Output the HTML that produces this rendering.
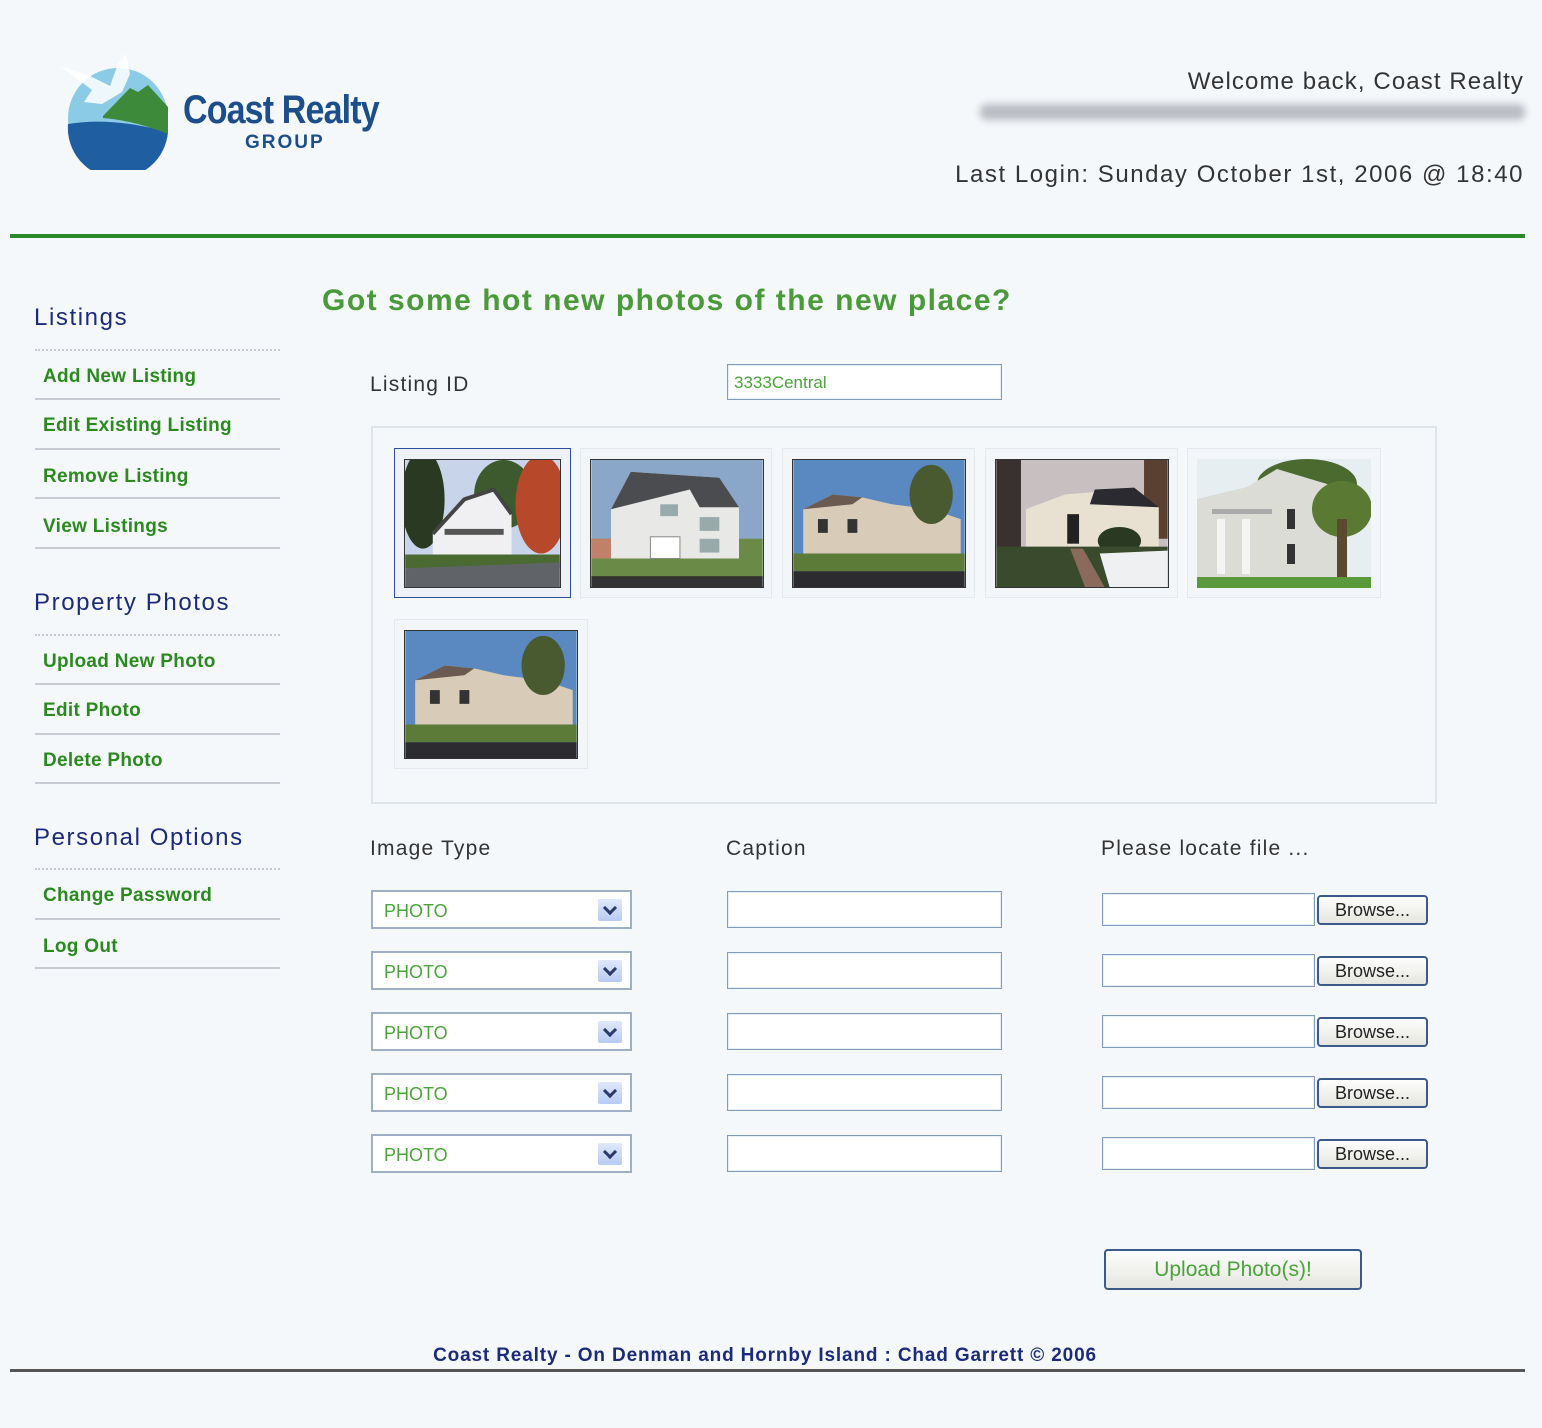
<!DOCTYPE html>
<html><head><meta charset="utf-8"><style>
*{margin:0;padding:0;box-sizing:border-box}
body{width:1542px;height:1428px;background:#f5f8fb;position:relative;overflow:hidden;font-family:"Liberation Sans",sans-serif}
.a{position:absolute;white-space:nowrap}
.h{color:#1b2b7a;font-size:24px;letter-spacing:1.6px}
.l{color:#2a8a1e;font-size:19px;font-weight:bold;left:43px;letter-spacing:.3px}
.dl{position:absolute;left:35px;width:245px;height:0;border-top:2px dotted #c8ccd2}
.sl{position:absolute;left:35px;width:245px;height:0;border-top:2px solid #c8ccd2}
.lab{color:#333;font-size:21px;letter-spacing:1.2px}
.in{position:absolute;background:#fff;border:1px solid #7f9db9;box-shadow:inset 0 0 0 1px #e8eef5}
.sel{position:absolute;left:371px;width:261px;height:39px;background:#fff;border:2px solid #9fb0c6}
.sel span{position:absolute;left:11px;top:9px;color:#4aa43a;font-size:18px}
.sel i{position:absolute;right:8px;top:7px;width:24px;height:22px;background:linear-gradient(#dfe8fb,#b8cbf3);border-radius:2px}
.sel i:after{content:"";position:absolute;left:7px;top:4px;width:7px;height:7px;border-right:3px solid #2c3a6a;border-bottom:3px solid #2c3a6a;transform:rotate(45deg)}
.br{position:absolute;left:1317px;width:111px;height:30px;border:2px solid #3b5a8a;border-radius:4px;background:linear-gradient(#fdfdfd,#e6e6e0);font-size:18px;color:#222;text-align:center;line-height:26px}
.tb{position:absolute;border:1px solid #e4e9ef;background:#f3f6f9}
.ph{position:absolute;left:9px;top:10px;border:1px solid #333}
</style></head><body>
<svg class="a" style="left:58px;top:52px" width="120" height="118" viewBox="0 0 120 118">
<circle cx="60" cy="66" r="50" fill="#8ccbe6"/>
<path d="M10 72 C45 66 80 72 110 80 A50 50 0 0 1 10 72Z" fill="#1f5ea0"/>
<path d="M45 64 L72 36 L80 40 L90 33 L110 55 L110 82 C90 74 68 68 45 66Z" fill="#3d8a3a"/>
<path d="M2 14 L32 24 L52 34 L60 12 L68 2 L72 22 L64 40 L44 52 L26 50 L34 38Z" fill="#fff" opacity=".85"/>
</svg>
<div class="a" style="left:183px;top:88px;font-size:40px;font-weight:bold;color:#1d4e8c;letter-spacing:-1px;transform:scaleX(.85);transform-origin:left">Coast Realty</div>
<div class="a" style="left:245px;top:132px;font-size:19px;font-weight:bold;color:#1d4e8c;letter-spacing:2px">GROUP</div>
<div class="a" style="right:18px;top:68px;font-size:24px;color:#333;letter-spacing:1.1px">Welcome back, Coast Realty</div>
<div class="a" style="left:980px;top:104px;width:545px;height:16px;background:#b8bcc2;filter:blur(4px);border-radius:6px"></div>
<div class="a" style="right:18px;top:161px;font-size:24px;color:#333;letter-spacing:1.55px">Last Login: Sunday October 1st, 2006 @ 18:40</div>
<div class="a" style="left:10px;top:234px;width:1515px;height:4px;background:#2a8a2a"></div>
<div class="a h" style="left:34px;top:304px">Listings</div>
<div class="dl" style="top:349px"></div>
<div class="a l" style="top:366px">Add New Listing</div><div class="sl" style="top:398px"></div>
<div class="a l" style="top:415px">Edit Existing Listing</div><div class="sl" style="top:448px"></div>
<div class="a l" style="top:466px">Remove Listing</div><div class="sl" style="top:497px"></div>
<div class="a l" style="top:516px">View Listings</div><div class="sl" style="top:547px"></div>
<div class="a h" style="left:34px;top:589px">Property Photos</div>
<div class="dl" style="top:634px"></div>
<div class="a l" style="top:651px">Upload New Photo</div><div class="sl" style="top:683px"></div>
<div class="a l" style="top:700px">Edit Photo</div><div class="sl" style="top:733px"></div>
<div class="a l" style="top:750px">Delete Photo</div><div class="sl" style="top:782px"></div>
<div class="a h" style="left:34px;top:824px">Personal Options</div>
<div class="dl" style="top:868px"></div>
<div class="a l" style="top:885px">Change Password</div><div class="sl" style="top:918px"></div>
<div class="a l" style="top:936px">Log Out</div><div class="sl" style="top:967px"></div>
<div class="a" style="left:322px;top:284px;font-size:30px;font-weight:bold;color:#4a9a3a;letter-spacing:1.5px">Got some hot new photos of the new place?</div>
<div class="a lab" style="left:370px;top:373px">Listing ID</div>
<div class="in" style="left:727px;top:364px;width:275px;height:36px"><span class="a" style="left:6px;top:8px;font-size:17px;color:#4aa43a">3333Central</span></div>
<div class="a" style="left:371px;top:426px;width:1066px;height:378px;border:2px solid #dfe4ea"></div>

<div class="tb" style="left:394px;top:448px;width:177px;height:150px;border:1px solid #2b4f9a;background:#eef2f6">
<svg class="ph" width="157" height="129" viewBox="0 0 157 129"><rect width="157" height="129" fill="#c8d4ea"/><ellipse cx="18" cy="40" rx="22" ry="50" fill="#2a3a22"/><ellipse cx="100" cy="35" rx="30" ry="35" fill="#3c5a2e"/><ellipse cx="138" cy="45" rx="26" ry="50" fill="#b8482a"/><path d="M28 75 L60 40 L90 30 L108 55 L108 96 L28 96Z" fill="#f0f0f2"/><path d="M28 75 L60 40 L90 30 L108 55" fill="none" stroke="#444" stroke-width="4"/><rect x="40" y="70" width="60" height="6" fill="#555"/><rect y="96" width="157" height="14" fill="#4a6a32"/><path d="M0 110 L157 104 L157 129 L0 129Z" fill="#606468"/></svg></div>
<div class="tb" style="left:580px;top:448px;width:192px;height:150px">
<svg class="ph" width="174" height="129" viewBox="0 0 174 129"><rect width="174" height="129" fill="#8aa6c8"/><rect y="80" width="174" height="40" fill="#6a8a48"/><rect x="0" y="80" width="60" height="20" fill="#c0806a"/><path d="M20 50 L40 12 L130 18 L150 48 L150 100 L20 100Z" fill="#e8e8e6"/><path d="M20 50 L40 12 L130 18 L150 48 L110 48 L100 30 Z" fill="#4a4c50"/><rect x="60" y="78" width="30" height="22" fill="#fff" stroke="#888"/><rect x="110" y="58" width="20" height="14" fill="#9aa"/><rect x="110" y="80" width="20" height="14" fill="#9aa"/><rect x="70" y="45" width="18" height="12" fill="#9aa"/><rect y="118" width="174" height="11" fill="#333"/></svg></div>
<div class="tb" style="left:782px;top:448px;width:193px;height:150px">
<svg class="ph" width="174" height="129" viewBox="0 0 174 129"><rect width="174" height="129" fill="#5a88c0"/><path d="M10 50 L40 35 L70 38 L100 45 L140 50 L170 60 L170 95 L10 95Z" fill="#d8ccb8"/><path d="M10 50 L40 35 L70 38 L60 45Z" fill="#6a5a50"/><ellipse cx="140" cy="35" rx="22" ry="30" fill="#4a5a30"/><rect x="25" y="60" width="10" height="14" fill="#333"/><rect x="55" y="60" width="10" height="14" fill="#333"/><rect y="95" width="174" height="18" fill="#5c7a38"/><rect y="113" width="174" height="16" fill="#2c2c30"/></svg></div>
<div class="tb" style="left:985px;top:448px;width:193px;height:150px">
<svg class="ph" width="174" height="129" viewBox="0 0 174 129"><rect width="174" height="129" fill="#c8c0c0"/><rect x="0" y="0" width="25" height="90" fill="#3a3030"/><rect x="150" y="0" width="24" height="80" fill="#5a4030"/><path d="M30 50 L70 35 L130 30 L165 48 L165 90 L30 90Z" fill="#e8e0d0"/><path d="M100 30 L140 28 L165 48 L95 45Z" fill="#2a2a30"/><rect x="72" y="55" width="12" height="30" fill="#222"/><ellipse cx="125" cy="82" rx="22" ry="14" fill="#2a3a22"/><rect y="88" width="174" height="41" fill="#3a4a2c"/><path d="M90 129 L75 90 L88 90 L110 129Z" fill="#8a6a5a"/><path d="M105 95 L174 92 L174 129 L115 129Z" fill="#eef0f2"/></svg></div>
<div class="tb" style="left:1187px;top:448px;width:194px;height:150px">
<svg class="ph" width="174" height="129" viewBox="0 0 174 129" style="border:none"><rect width="174" height="129" fill="#e6eef2"/><ellipse cx="110" cy="25" rx="50" ry="25" fill="#4a6a30"/><path d="M0 40 L50 28 L80 10 L130 25 L150 40 L150 120 L0 120Z" fill="#dcdcd6"/><rect x="15" y="50" width="60" height="5" fill="#aaa"/><rect x="20" y="60" width="8" height="55" fill="#f4f4f4"/><rect x="45" y="60" width="8" height="55" fill="#f4f4f4"/><rect x="90" y="50" width="8" height="20" fill="#333"/><rect x="90" y="85" width="8" height="20" fill="#333"/><ellipse cx="145" cy="50" rx="30" ry="28" fill="#5a7a34"/><rect x="140" y="60" width="10" height="65" fill="#5a4a30"/><rect y="118" width="174" height="11" fill="#5a9a3c"/></svg></div>
<div class="tb" style="left:394px;top:619px;width:194px;height:150px">
<svg class="ph" width="174" height="129" viewBox="0 0 174 129"><rect width="174" height="129" fill="#5a88c0"/><path d="M10 50 L40 35 L70 38 L100 45 L140 50 L170 60 L170 95 L10 95Z" fill="#d8ccb8"/><path d="M10 50 L40 35 L70 38 L60 45Z" fill="#6a5a50"/><ellipse cx="140" cy="35" rx="22" ry="30" fill="#4a5a30"/><rect x="25" y="60" width="10" height="14" fill="#333"/><rect x="55" y="60" width="10" height="14" fill="#333"/><rect y="95" width="174" height="18" fill="#5c7a38"/><rect y="113" width="174" height="16" fill="#2c2c30"/></svg></div>

<div class="a lab" style="left:370px;top:837px">Image Type</div>
<div class="a lab" style="left:726px;top:837px">Caption</div>
<div class="a lab" style="left:1101px;top:837px">Please locate file ...</div>

<div class="sel" style="top:890px"><span>PHOTO</span><i></i></div>
<div class="sel" style="top:951px"><span>PHOTO</span><i></i></div>
<div class="sel" style="top:1012px"><span>PHOTO</span><i></i></div>
<div class="sel" style="top:1073px"><span>PHOTO</span><i></i></div>
<div class="sel" style="top:1134px"><span>PHOTO</span><i></i></div>

<div class="in" style="left:727px;top:891px;width:275px;height:37px"></div>
<div class="in" style="left:727px;top:952px;width:275px;height:37px"></div>
<div class="in" style="left:727px;top:1013px;width:275px;height:37px"></div>
<div class="in" style="left:727px;top:1074px;width:275px;height:37px"></div>
<div class="in" style="left:727px;top:1135px;width:275px;height:37px"></div>

<div class="in" style="left:1102px;top:893px;width:213px;height:33px"></div><div class="br" style="top:895px">Browse...</div>
<div class="in" style="left:1102px;top:954px;width:213px;height:33px"></div><div class="br" style="top:956px">Browse...</div>
<div class="in" style="left:1102px;top:1015px;width:213px;height:33px"></div><div class="br" style="top:1017px">Browse...</div>
<div class="in" style="left:1102px;top:1076px;width:213px;height:33px"></div><div class="br" style="top:1078px">Browse...</div>
<div class="in" style="left:1102px;top:1137px;width:213px;height:33px"></div><div class="br" style="top:1139px">Browse...</div>

<div class="a" style="left:1104px;top:1249px;width:258px;height:41px;border:2px solid #3b5a8a;border-radius:4px;background:linear-gradient(#fdfdfd,#e6e6e0);font-size:21px;color:#4aa43a;text-align:center;line-height:37px">Upload Photo(s)!</div>

<div class="a" style="left:0;width:1530px;top:1345px;text-align:center;font-size:19px;color:#1b2b7a;font-weight:bold;letter-spacing:.85px">Coast Realty - On Denman and Hornby Island : Chad Garrett © 2006</div>
<div class="a" style="left:10px;top:1369px;width:1515px;height:3px;background:#555"></div>
</body></html>
